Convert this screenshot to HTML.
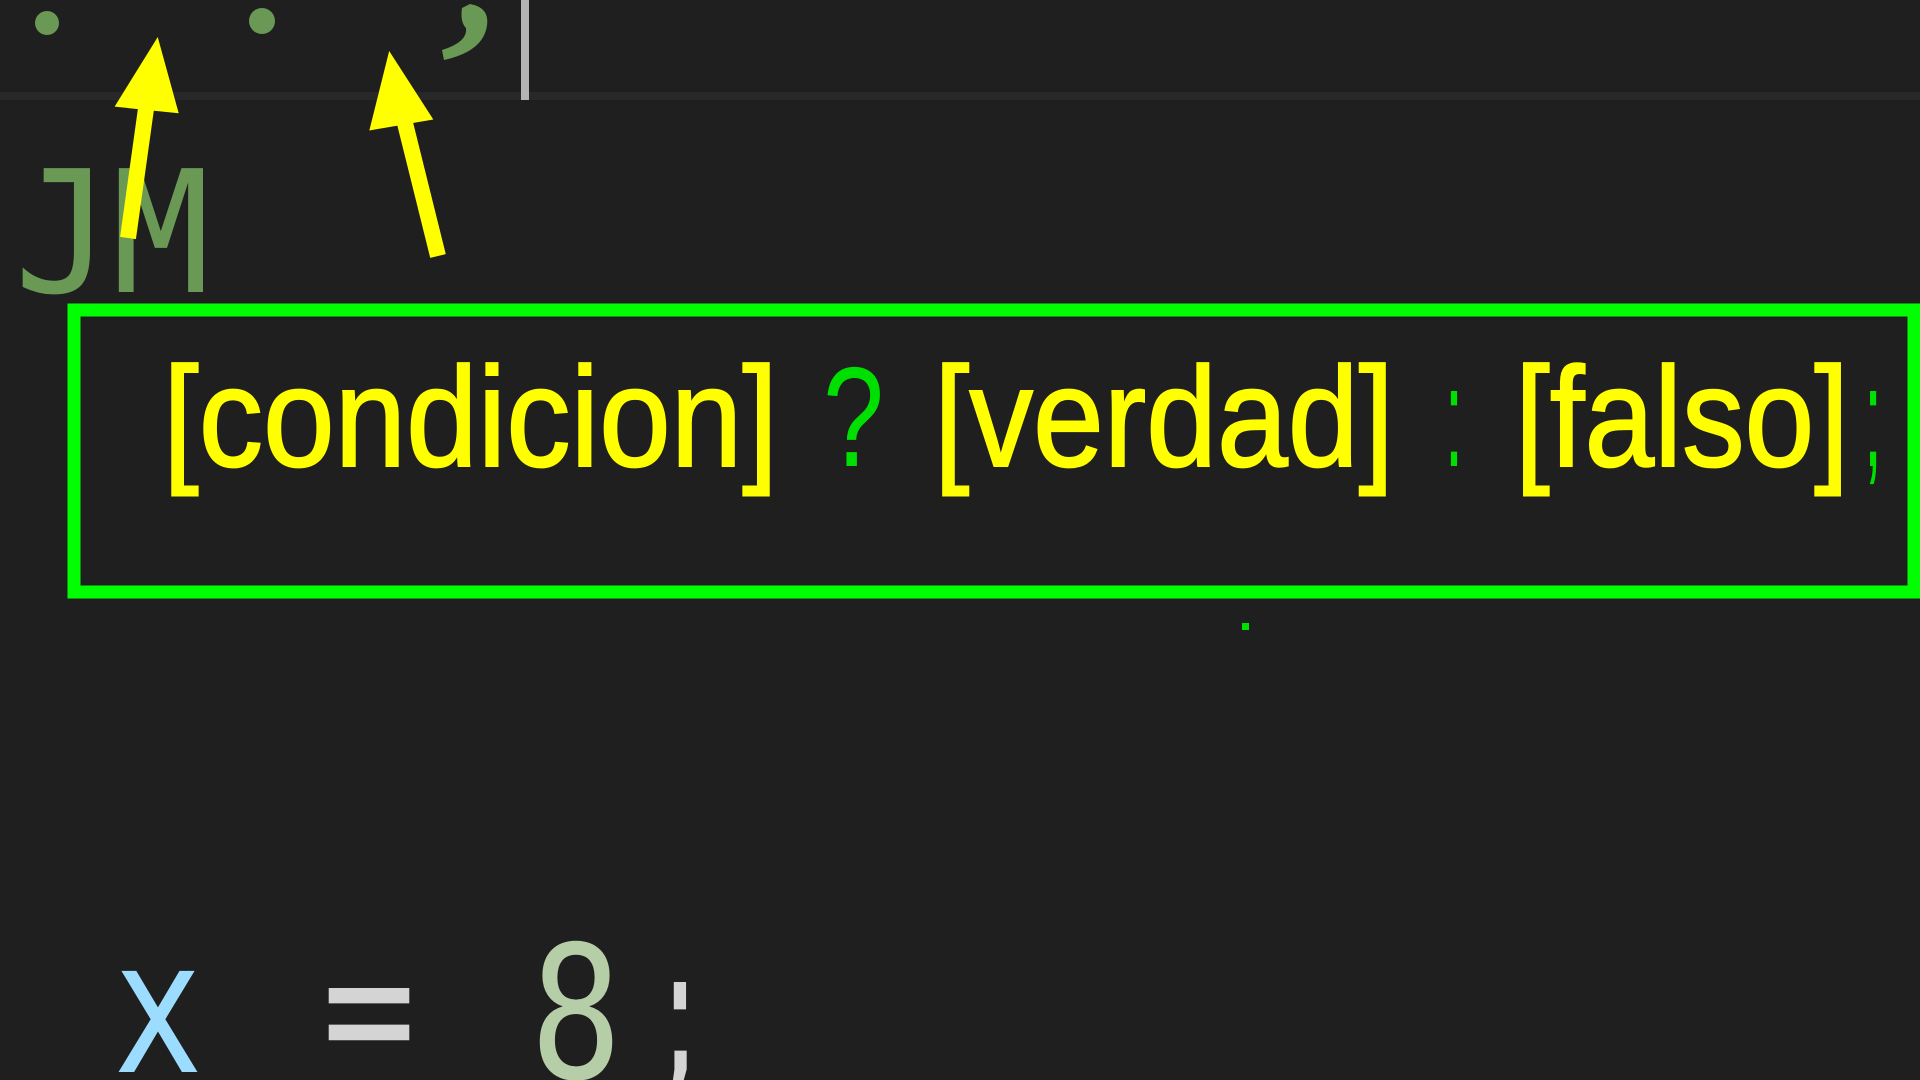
<!DOCTYPE html>
<html><head><meta charset="utf-8"><style>
html,body{margin:0;padding:0;background:#1f1f1f;width:1920px;height:1080px;overflow:hidden}
svg{display:block}
</style></head><body>
<svg width="1920" height="1080" viewBox="0 0 1920 1080" xmlns="http://www.w3.org/2000/svg">
<rect width="1920" height="1080" fill="#1f1f1f"/>
<rect x="0" y="92" width="1920" height="8" fill="#282828"/>
<rect x="521" y="0" width="8" height="100" fill="#b4b4b4"/>
<circle cx="47" cy="23" r="12" fill="#6a9955"/>
<circle cx="262" cy="21" r="13" fill="#6a9955"/>
<path d="M470 4 Q492 8 486 30 Q480 52 444 60 L442 50 Q468 42 466 28 Q460 22 462 8 Z" fill="#6a9955"/>
<text x="14" y="292" font-family="DejaVu Sans Mono, Liberation Mono, monospace" font-size="170" fill="#6a9955" textLength="196" lengthAdjust="spacingAndGlyphs">JM</text>
<g fill="#ffff00" stroke="#ffff00" stroke-width="16" stroke-linejoin="miter">
<line x1="128" y1="238" x2="150" y2="80"/>
<polygon points="157,42 118,105 176,111" stroke-width="4"/>
<line x1="438" y1="256" x2="398" y2="95"/>
<polygon points="390,56 372,128 430,118" stroke-width="4"/>
</g>
<rect x="74" y="310" width="1840" height="282" fill="none" stroke="#00ff00" stroke-width="13"/>
<g font-family="Liberation Sans, Arial, sans-serif" font-size="142" stroke-width="2">
<text x="163" y="466" fill="#ffff00" stroke="#ffff00" textLength="615" lengthAdjust="spacingAndGlyphs">[condicion]</text>
<text x="823" y="466" fill="#00e000" textLength="61" lengthAdjust="spacingAndGlyphs">?</text>
<text x="934" y="466" fill="#ffff00" stroke="#ffff00" textLength="460" lengthAdjust="spacingAndGlyphs">[verdad]</text>
<text x="1445" y="466" fill="#00e000" textLength="18" lengthAdjust="spacingAndGlyphs">:</text>
<text x="1515" y="466" fill="#ffff00" stroke="#ffff00" textLength="334" lengthAdjust="spacingAndGlyphs">[falso]</text>
<text x="1864" y="466" fill="#00e000" textLength="18" lengthAdjust="spacingAndGlyphs">;</text>
</g>
<rect x="1242" y="623" width="7" height="7" fill="#00e000"/>
<g font-family="DejaVu Sans Mono, Liberation Mono, monospace" font-size="185">
<text x="113" y="1072" fill="#9cdcfe" textLength="90" lengthAdjust="spacingAndGlyphs">x</text>
<text x="322" y="1072" fill="#d4d4d4" textLength="94" lengthAdjust="spacingAndGlyphs">=</text>
<text x="530" y="1078" fill="#b5cea8" textLength="92" lengthAdjust="spacingAndGlyphs">8</text>
<text x="650" y="1078" fill="#d4d4d4" textLength="60" lengthAdjust="spacingAndGlyphs">;</text>
</g>
</svg>
</body></html>
